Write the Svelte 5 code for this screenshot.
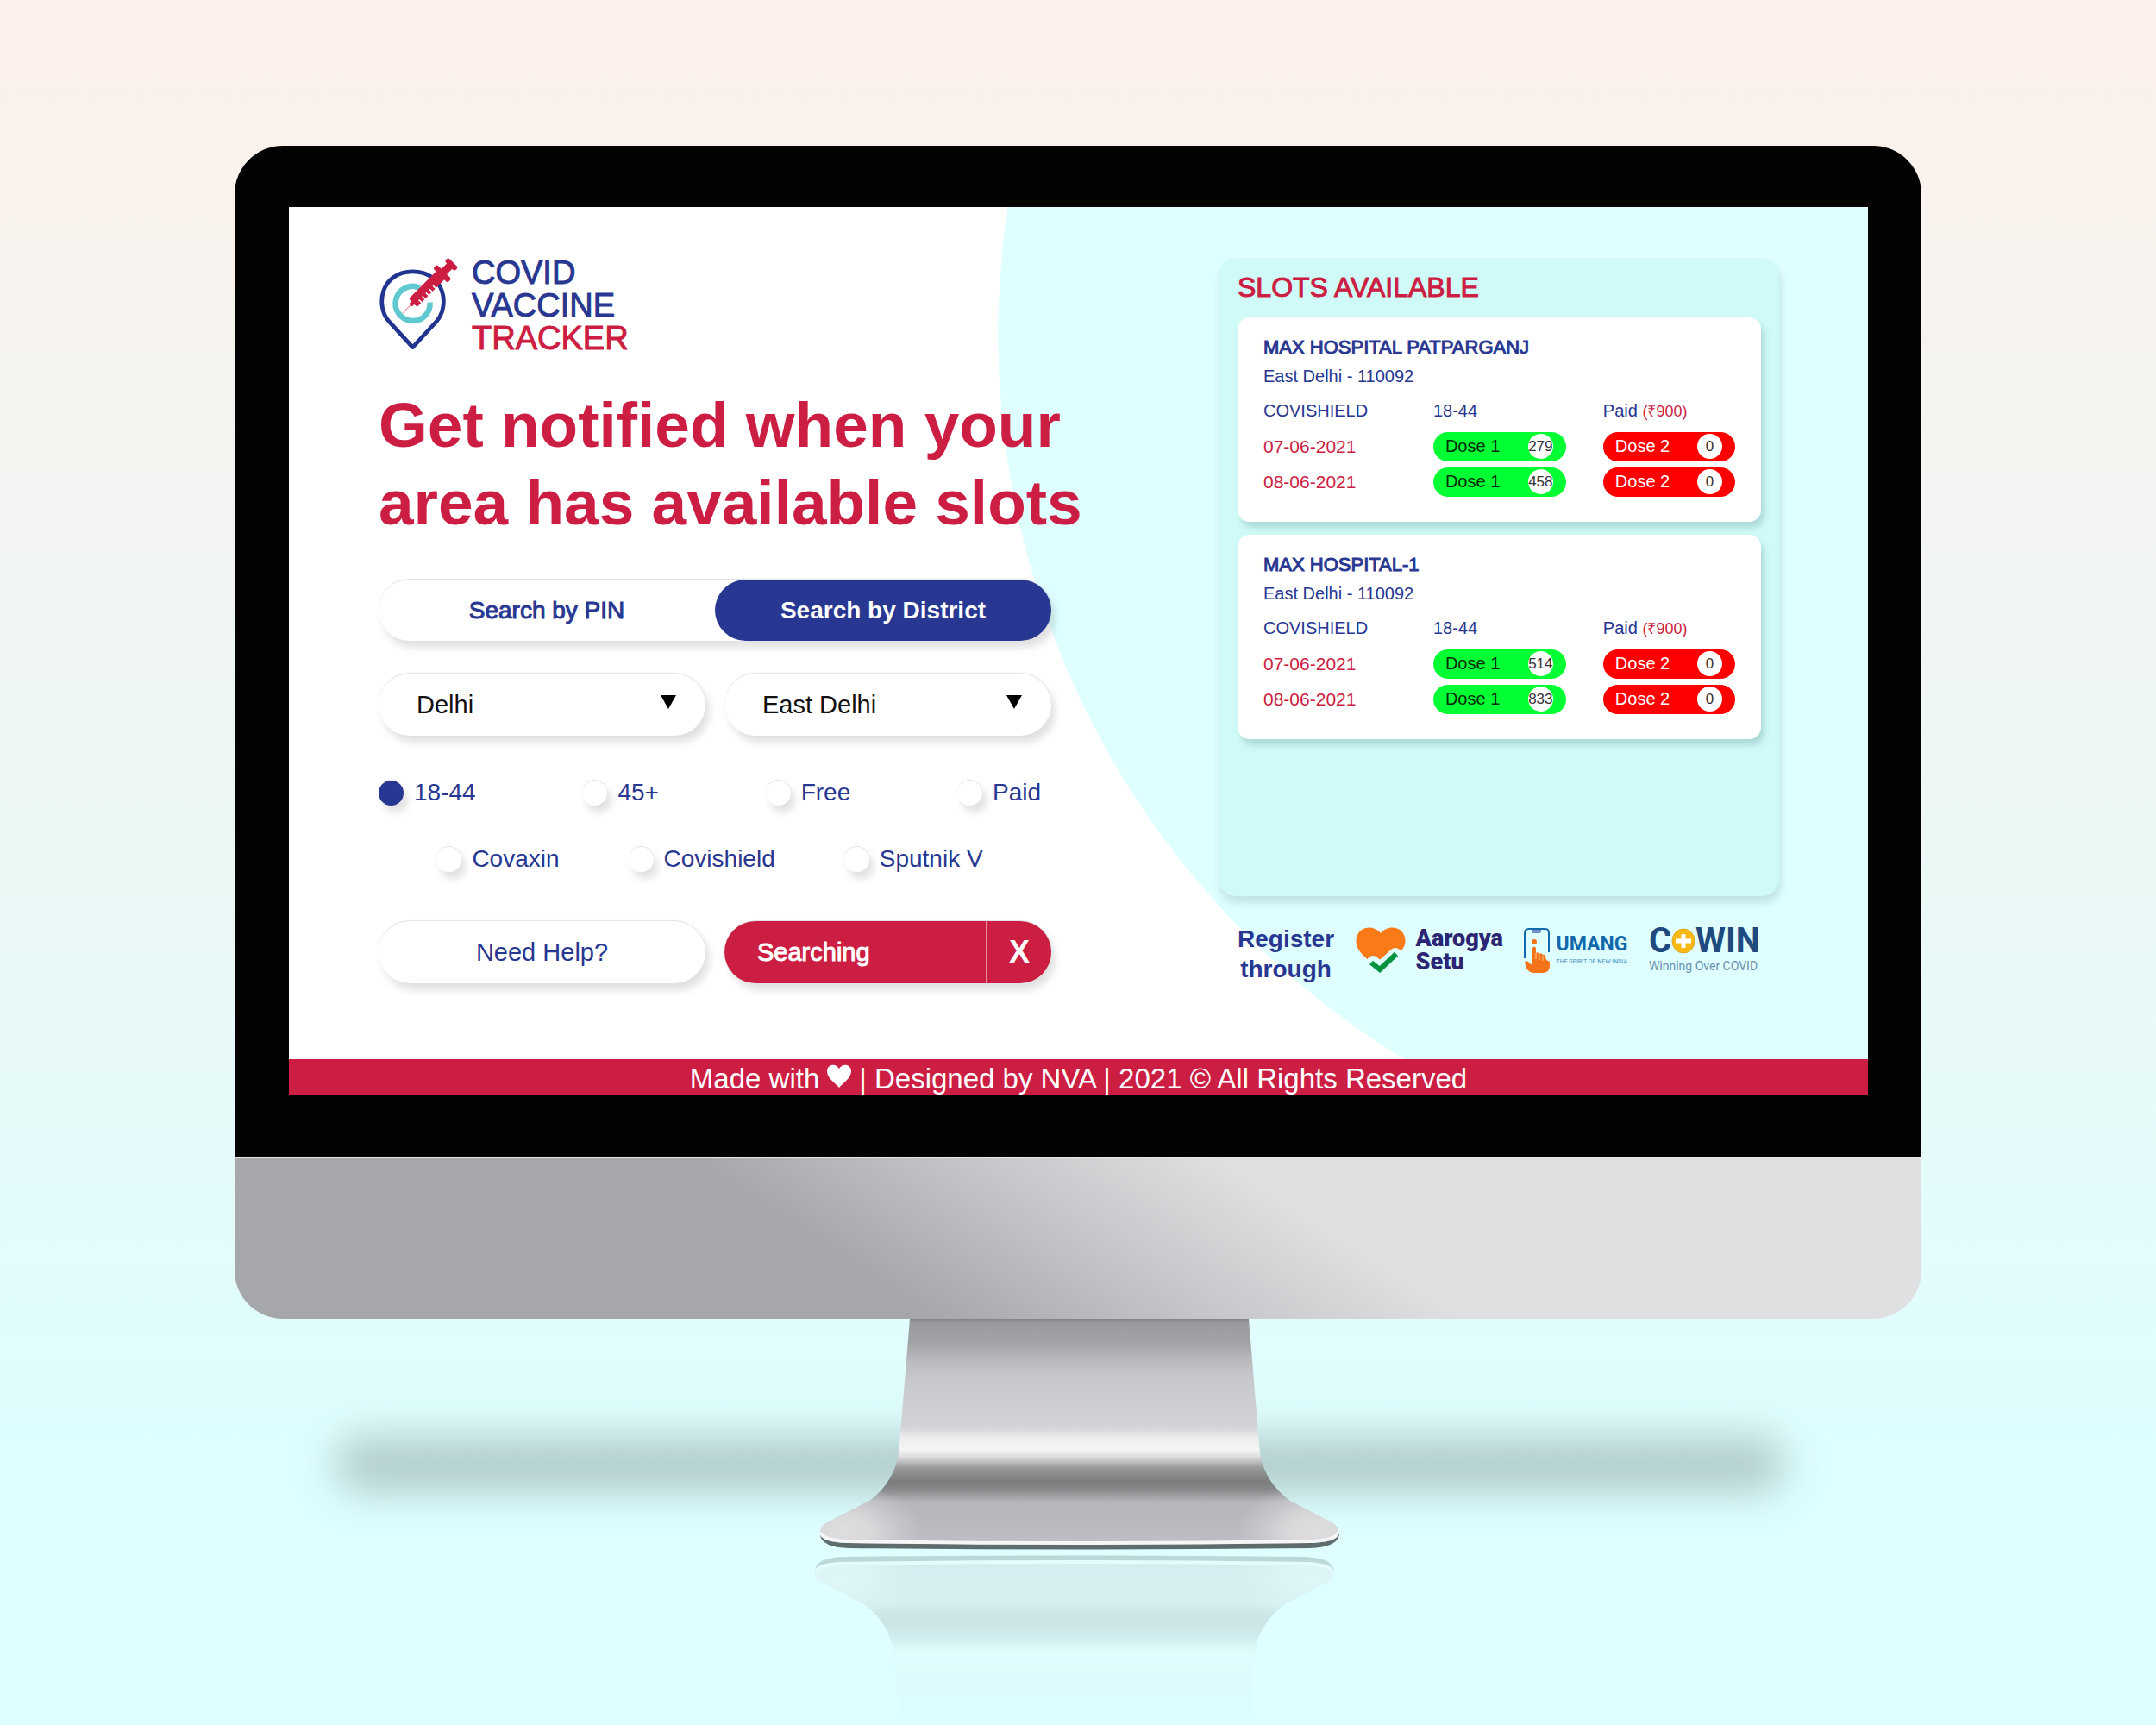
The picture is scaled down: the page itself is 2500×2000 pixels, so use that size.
<script>
  const hospitals = [
    {
      name: 'MAX HOSPITAL PATPARGANJ',
      place: 'East Delhi - 110092',
      vaccine: 'COVISHIELD',
      age: '18-44',
      price: '(₹900)',
      days: [
        { date: '07-06-2021', first: 279, second: 0 },
        { date: '08-06-2021', first: 458, second: 0 }
      ]
    },
    {
      name: 'MAX HOSPITAL-1',
      place: 'East Delhi - 110092',
      vaccine: 'COVISHIELD',
      age: '18-44',
      price: '(₹900)',
      days: [
        { date: '07-06-2021', first: 514, second: 0 },
        { date: '08-06-2021', first: 833, second: 0 }
      ]
    }
  ];
  const groups = ['18-44', '45+', 'Free', 'Paid'];
  const vaccines = ['Covaxin', 'Covishield', 'Sputnik V'];
  let choice = $state('18-44');
</script>

<div class="page">
  <div class="monitor">
    <div class="bezel">
      <div class="screen">
        <main>
          <section class="finder">
            <div class="brand">
              <svg class="pin" viewBox="60 60 270 315" aria-hidden="true">
                <path d="M176 365 L95 277 C48 224 66 107 176 107 C286 107 304 224 257 277 Z" fill="none" stroke="#21348f" stroke-width="14" stroke-linejoin="round" />
                <path d="M200 162 A59 59 0 1 0 235 212" fill="none" stroke="#5fc8d0" stroke-width="19" />
                <path d="M142 248 L176 214" stroke="#fff" stroke-width="12" />
                <path d="M142 248 L176 214" stroke="#f0a3b0" stroke-width="4" />
                <g transform="translate(168 222) rotate(-45)" fill="#cc1d42">
                  <rect x="0" y="-7" width="16" height="14" rx="4" />
                  <path d="M12 -14 Q12 -20 18 -20 H146 V20 H18 Q12 20 12 14 Z" />
                  <rect x="144" y="-35" width="19" height="70" rx="8" />
                  <rect x="160" y="-13" width="36" height="26" />
                  <rect x="189" y="-24" width="18" height="48" rx="8" />
                  <path d="M34 7 V20 M51 7 V20 M68 7 V20 M85 7 V20 M102 7 V20" stroke="#fff" stroke-width="5" />
                </g>
              </svg>
              <p class="wordmark">COVID<br />VACCINE<br /><span>TRACKER</span></p>
            </div>

            <h1>Get notified when your<br />area has available slots</h1>

            <div class="toggle">
              <button type="button">Search by PIN</button>
              <button type="button" class="active">Search by District</button>
            </div>

            <div class="pair selects">
              <label class="select">
                <select aria-label="State"><option>Delhi</option></select>
                <svg viewBox="0 0 18 16" aria-hidden="true"><path d="M0 0H18L9 16Z" /></svg>
              </label>
              <label class="select">
                <select aria-label="District"><option>East Delhi</option></select>
                <svg viewBox="0 0 18 16" aria-hidden="true"><path d="M0 0H18L9 16Z" /></svg>
              </label>
            </div>

            <div class="radios groups">
              {#each groups as g}
                <label><input type="radio" name="filter" value={g} bind:group={choice} />{g}</label>
              {/each}
            </div>
            <div class="radios vaccines">
              {#each vaccines as v}
                <label><input type="radio" name="filter" value={v} bind:group={choice} />{v}</label>
              {/each}
            </div>

            <div class="pair">
              <button type="button" class="help">Need Help?</button>
              <div class="searching">
                <button type="button" class="go">Searching</button>
                <button type="button" class="stop" aria-label="Stop searching">X</button>
              </div>
            </div>
          </section>

          <section class="results">
            <div class="panel">
              <h2>SLOTS AVAILABLE</h2>
              {#each hospitals as h}
                <article>
                  <h3>{h.name}</h3>
                  <p>{h.place}</p>
                  <table>
                    <thead>
                      <tr>
                        <th>{h.vaccine}</th>
                        <th>{h.age}</th>
                        <th>Paid <small>{h.price}</small></th>
                      </tr>
                    </thead>
                    <tbody>
                      {#each h.days as d}
                        <tr>
                          <td>{d.date}</td>
                          <td><span class="dose">Dose 1 <b>{d.first}</b></span></td>
                          <td><span class="dose full">Dose 2 <b>{d.second}</b></span></td>
                        </tr>
                      {/each}
                    </tbody>
                  </table>
                </article>
              {/each}
            </div>

            <div class="register">
              <p>Register<br />through</p>
              <a class="aarogya" href="#aarogya">
                <svg viewBox="0 0 58 54" aria-hidden="true">
                  <path d="M29 7 C22 -2 7 -2 2 9 C-3 22 5 30 17 40 L29 48 L41 38 C53 29 61 21 56 9 C51 -2 36 -2 29 7 Z" fill="#fa7a18" />
                  <path d="M20 40 L28 47 L46 31" fill="none" stroke="#defeff" stroke-width="14" stroke-linecap="round" />
                  <path d="M18 41 L28 49 L47 31" fill="none" stroke="#04923f" stroke-width="6" />
                </svg>
                <span>Aarogya<br />Setu</span>
              </a>
              <a class="umang" href="#umang">
                <svg viewBox="0 0 31 54" aria-hidden="true">
                  <path d="M1 36 V7 Q1 2 6 2 H25 Q29 2 29 7 V29" fill="none" stroke="#1268ab" stroke-width="2" />
                  <path d="M9 3 H20 V5 Q20 7 18 7 H11 Q9 7 9 5 Z" fill="#6d8fc6" />
                  <circle cx="12" cy="17" r="3" fill="#f5741a" />
                  <path d="M10 24 Q12 21 14 24 V30 Q16 28 18 31 Q20 29 22 32 Q24 31 25 34 L26 38 L30 40 V46 Q29 53 22 53 H11 Q2 52 1 40 Q5 38 8 43 L10 44 Z" fill="#f5741a" />
                  <path d="M14 30 V37 M18 32 V38 M22 33 V39" stroke="#fbc29a" stroke-width="1" />
                </svg>
                <span><strong>UMANG</strong><small>THE SPIRIT OF NEW INDIA</small></span>
              </a>
              <a class="cowin" href="#cowin">
                <strong>C<svg viewBox="0 0 28 30" aria-label="O"><ellipse cx="14" cy="15" rx="13" ry="14" fill="#fbb912" stroke="#e0a52a" /><path d="M14 7 V23 M5 15 H23" stroke="#fff" stroke-width="5" /></svg>WIN</strong>
                <small>Winning Over COVID</small>
              </a>
            </div>
          </section>
        </main>

        <footer>
          Made with
          <svg viewBox="0 0 30 28" aria-label="love"><path d="M15 27 C10 21 1 16 1 8 C1 0 11 -2 15 5 C19 -2 29 0 29 8 C29 16 20 21 15 27Z" fill="#fff" /></svg>
          | Designed by NVA | 2021 © All Rights Reserved
        </footer>
      </div>
    </div>
    <div class="chin"></div>
  </div>

  <svg class="stand" viewBox="338 1528 1824 472" aria-hidden="true">
    <defs>
      <linearGradient id="metal" gradientUnits="userSpaceOnUse" x1="0" y1="1528" x2="0" y2="1790">
        <stop offset="0" stop-color="#828386" />
        <stop offset=".02" stop-color="#9a9b9f" />
        <stop offset=".11" stop-color="#a3a4a8" />
        <stop offset=".18" stop-color="#b8b9bd" />
        <stop offset=".26" stop-color="#c7c8cc" />
        <stop offset=".48" stop-color="#d3d4d8" />
        <stop offset=".53" stop-color="#eeeef0" />
        <stop offset=".58" stop-color="#f4f5f7" />
        <stop offset=".61" stop-color="#dededf" />
        <stop offset=".66" stop-color="#98999b" />
        <stop offset=".72" stop-color="#7a7b7d" />
        <stop offset=".76" stop-color="#8a8b8d" />
        <stop offset=".81" stop-color="#b5b6ba" />
        <stop offset="1" stop-color="#bebfc4" />
      </linearGradient>
      <radialGradient id="shine">
        <stop offset="0" stop-color="#dededf" />
        <stop offset=".35" stop-color="#dcdcdf" stop-opacity=".9" />
        <stop offset=".7" stop-color="#dcdcdf" stop-opacity=".35" />
        <stop offset="1" stop-color="#dcdcdf" stop-opacity="0" />
      </radialGradient>
      <linearGradient id="fade" gradientUnits="userSpaceOnUse" x1="0" y1="1798" x2="0" y2="1598">
        <stop offset="0" stop-color="#fff" stop-opacity=".27" />
        <stop offset=".45" stop-color="#fff" stop-opacity=".18" />
        <stop offset="1" stop-color="#fff" stop-opacity="0" />
      </linearGradient>
      <mask id="reflect" maskUnits="userSpaceOnUse" x="900" y="1528" width="700" height="280">
        <rect x="900" y="1528" width="700" height="280" fill="url(#fade)" />
      </mask>
      <filter id="soft" filterUnits="userSpaceOnUse" x="300" y="1560" width="1900" height="280">
        <feGaussianBlur stdDeviation="24" />
      </filter>
      <clipPath id="shape">
        <path d="M1055 1528 H1448 L1461 1684 C1465 1708 1478 1726 1496 1739 L1547 1766 Q1552 1770 1552 1778 Q1550 1787 1520 1788 Q1252 1792 983 1788 Q953 1787 951 1778 Q951 1770 956 1766 L1008 1739 C1026 1726 1038 1708 1042 1684 Z" />
      </clipPath>
      <g id="leg">
        <path d="M951 1778 Q952 1793 985 1794 Q1252 1797 1518 1794 Q1551 1793 1553 1778 Z" fill="#5d6c6c" />
        <g clip-path="url(#shape)">
          <rect x="940" y="1528" width="620" height="264" fill="url(#metal)" />
          <ellipse cx="978" cy="1774" rx="90" ry="56" fill="url(#shine)" />
          <ellipse cx="1525" cy="1774" rx="90" ry="56" fill="url(#shine)" />
          <path d="M951 1776 Q955 1785 983 1786 Q1252 1790 1520 1786 Q1548 1785 1552 1776" fill="none" stroke="#f6f6f7" stroke-width="4" />
        </g>
      </g>
    </defs>
    <rect x="388" y="1666" width="1682" height="62" rx="31" fill="#5f6b6a" fill-opacity=".36" filter="url(#soft)" />
    <g transform="translate(-6 3598) scale(1 -1)"><g mask="url(#reflect)"><use href="#leg" /></g></g>
    <use href="#leg" />
  </svg>
</div>

<style>
  :global(body) {
    margin: 0;
  }
  .page {
    --blue: #283791;
    --red: #cc1d42;
    --lift: 5px 8px 10px rgba(0, 0, 0, 0.12), 0 -1px 1px rgba(0, 0, 0, 0.12);
    min-height: 100vh;
    box-sizing: border-box;
    padding-top: 169px;
    overflow: hidden;
    display: flex;
    flex-direction: column;
    align-items: center;
    background: linear-gradient(#fcf0eb 0, #faf1ec 160px, #defeff 1720px);
    font-family: 'Liberation Sans', Arial, sans-serif;
    color: var(--blue);
  }
  h1, h2, h3, p {
    margin: 0;
  }
  button, select {
    font: inherit;
    color: inherit;
    border: 0;
    background: none;
    padding: 0;
  }
  a {
    color: inherit;
    text-decoration: none;
  }
  .monitor {
    width: 80%;
    max-width: 1956px;
  }
  .bezel {
    background: #030303;
    border-radius: 56px 56px 0 0;
    padding: 71px 62px 71px 63px;
  }
  .screen {
    background: radial-gradient(circle 985px at 1807px 148px, #defeff 984px, #fff 985px);
  }
  main {
    display: grid;
    grid-template-columns: minmax(0, 780fr) minmax(0, 650fr);
    column-gap: 194px;
    padding: 59px 103px 87px 104px;
  }
  .brand {
    display: flex;
    gap: 16px;
  }
  .pin {
    width: 92px;
    height: 107px;
  }
  .wordmark {
    font-size: 38px;
    line-height: 38px;
    margin-top: -2px;
    -webkit-text-stroke: 1px currentColor;
  }
  .wordmark span {
    color: var(--red);
  }
  h1 {
    margin-top: 37px;
    font-size: 73px;
    line-height: 90px;
    color: var(--red);
    white-space: nowrap;
  }
  .toggle {
    margin-top: 44px;
    display: flex;
    height: 71px;
    border-radius: 36px;
    background: #fff;
    box-shadow: var(--lift);
    font-size: 28px;
  }
  .toggle button {
    flex: 1;
    border-radius: 36px;
    -webkit-text-stroke: 1px currentColor;
  }
  .toggle .active {
    background: var(--blue);
    color: #fff;
    font-weight: bold;
    -webkit-text-stroke: 0;
  }
  .pair {
    display: grid;
    grid-template-columns: 1fr 1fr;
    gap: 22px;
    margin-top: 55px;
    font-size: 29px;
  }
  .selects {
    margin-top: 38px;
  }
  .select {
    position: relative;
    display: block;
  }
  select {
    appearance: none;
    width: 100%;
    height: 72px;
    padding: 0 44px;
    border-radius: 36px;
    background: #fff;
    color: #111;
    box-shadow: var(--lift);
  }
  .select svg {
    position: absolute;
    right: 34px;
    top: 25px;
    width: 18px;
    height: 16px;
    pointer-events: none;
  }
  .radios {
    display: flex;
    font-size: 28px;
    line-height: 34px;
    padding-right: 12px;
  }
  .radios label {
    display: flex;
    align-items: center;
    gap: 12px;
  }
  .groups {
    margin-top: 49px;
    justify-content: space-between;
  }
  .vaccines {
    margin-top: 43px;
    justify-content: center;
    gap: 80px;
  }
  input {
    appearance: none;
    margin: 0;
    width: 29px;
    height: 29px;
    border-radius: 50%;
    background: #fff;
    box-shadow: var(--lift);
  }
  input:checked {
    background: var(--blue);
  }
  .help, .searching {
    height: 72px;
    border-radius: 36px;
    background: #fff;
    box-shadow: var(--lift);
  }
  .searching {
    display: flex;
    background: var(--red);
    color: #fff;
    overflow: hidden;
  }
  .go {
    flex: 1;
    text-align: left;
    padding-left: 38px;
    -webkit-text-stroke: 1px currentColor;
  }
  .stop {
    width: 76px;
    border-left: 2px solid #e893a5;
    font-size: 36px;
    font-weight: bold;
  }
  .panel {
    box-sizing: border-box;
    padding: 0 21px 182px 22px;
    border-radius: 20px;
    background: #cffaf8;
    box-shadow: 2px 8px 8px rgba(0, 60, 60, 0.13);
  }
  h2 {
    font-size: 32px;
    line-height: 69px;
    font-weight: normal;
    color: var(--red);
    -webkit-text-stroke: 1px currentColor;
  }
  article {
    padding: 19px 30px 26px;
    border-radius: 14px;
    background: #fff;
    box-shadow: 4px 7px 7px rgba(0, 60, 60, 0.16);
  }
  article + article {
    margin-top: 15px;
  }
  h3 {
    font-size: 22px;
    line-height: 32px;
    font-weight: normal;
    -webkit-text-stroke: 1px currentColor;
  }
  article p {
    font-size: 20px;
    line-height: 34px;
  }
  table {
    width: 100%;
    margin-top: 3px;
    table-layout: fixed;
    border-collapse: collapse;
    font-size: 20px;
    line-height: 25px;
  }
  th, td {
    height: 41px;
    padding: 0;
    text-align: left;
    font-weight: normal;
  }
  th:nth-child(-n + 2) {
    width: 36%;
  }
  th small {
    font-size: 18px;
    color: var(--red);
  }
  td {
    color: var(--red);
    font-size: 21px;
  }
  .dose {
    box-sizing: border-box;
    display: flex;
    align-items: center;
    justify-content: space-between;
    height: 34px;
    padding: 0 15px 0 14px;
    border-radius: 17px;
    background: #00ff33;
    color: #032b08;
    font-size: 20px;
  }
  td:nth-child(2) .dose {
    margin-right: 43px;
  }
  .full {
    background: #fe0000;
    color: #fff;
  }
  .dose b {
    display: flex;
    align-items: center;
    justify-content: center;
    width: 29px;
    height: 29px;
    border-radius: 50%;
    background: #fff;
    color: #333;
    font-size: 17px;
    font-weight: normal;
  }
  .register {
    display: flex;
    align-items: flex-start;
    justify-content: space-between;
    margin-top: 32px;
    padding: 0 22px;
  }
  .register p {
    font-size: 28px;
    line-height: 35px;
    font-weight: bold;
    text-align: center;
  }
  .aarogya, .umang {
    display: flex;
    padding-top: 4px;
  }
  .aarogya {
    gap: 12px;
    color: #2b2573;
    font: 900 27px/27px Roboto, sans-serif;
  }
  .aarogya svg {
    width: 58px;
    height: 54px;
  }
  .umang {
    gap: 6px;
    color: #1268ab;
  }
  .umang svg {
    width: 31px;
    height: 54px;
  }
  .umang strong, .umang small, .cowin strong, .cowin small {
    display: block;
  }
  .umang strong {
    margin-top: 6px;
    font: bold 23px/28px Roboto, sans-serif;
  }
  .umang small {
    font: 7px/12px Roboto, sans-serif;
    color: #3f8dc0;
  }
  .cowin {
    color: #1f4a80;
    font-family: Roboto, sans-serif;
  }
  .cowin strong {
    display: flex;
    align-items: center;
    font-size: 40px;
    line-height: 40px;
  }
  .cowin svg {
    width: 28px;
    height: 30px;
  }
  .cowin small {
    font-size: 14px;
    line-height: 18px;
    color: #6a8fae;
  }
  footer {
    display: flex;
    align-items: center;
    justify-content: center;
    gap: 8px;
    height: 42px;
    background: var(--red);
    color: #fff;
    font-size: 33px;
    white-space: nowrap;
    padding-top: 3px;
    box-sizing: border-box;
  }
  footer svg {
    width: 30px;
    height: 28px;
    margin-bottom: 6px;
  }
  .chin {
    height: 188px;
    box-sizing: border-box;
    border-top: 2px solid #e6e6e8;
    border-radius: 0 0 56px 56px;
    background: linear-gradient(33deg, #a6a7ab 36%, #c4c5c8 50%, #dfe0e2 64%);
  }
  .stand {
    width: 75%;
    max-width: 1824px;
    height: auto;
  }
</style>
